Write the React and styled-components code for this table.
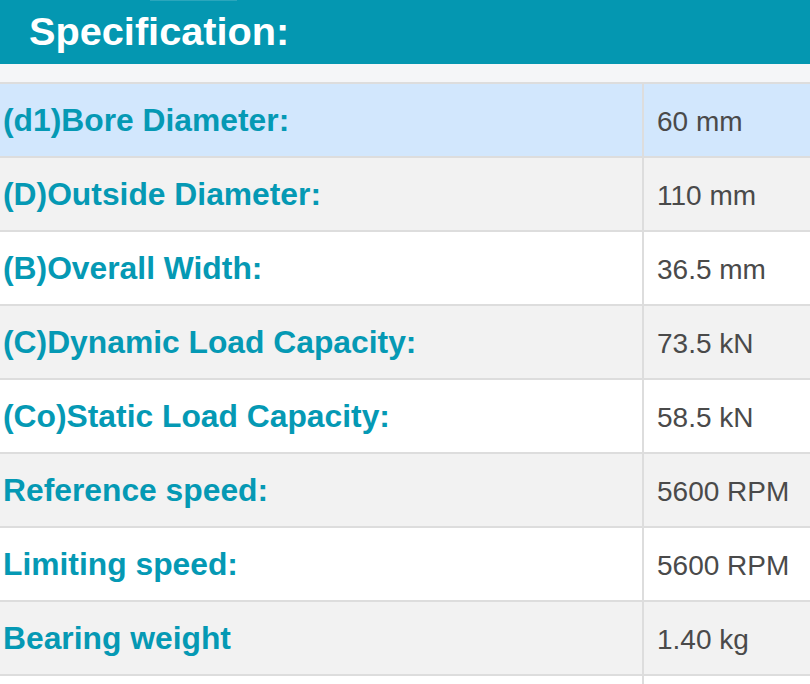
import React from "react";
import styled, { createGlobalStyle } from "styled-components";

const Global = createGlobalStyle`
  html, body { margin: 0; padding: 0; background: #ffffff; }
  body { font-family: "Liberation Sans", Arial, Helvetica, sans-serif; overflow: hidden; }
`;

const Page = styled.div`
  width: 810px;
  height: 684px;
  overflow: hidden;
  display: flex;
  flex-direction: column;
`;

const Header = styled.header`
  position: relative;
  height: 64px;
  flex: none;
  background: #0497b1;
  display: flex;
  align-items: center;
  padding-left: 29px;
  &::before {
    content: "";
    position: absolute;
    top: 0;
    left: 150px;
    width: 87px;
    height: 1px;
    background: #2aa6bc;
  }
`;

const Title = styled.h2`
  margin: 0;
  color: #ffffff;
  font-weight: 700;
  font-size: 39.7px;
  line-height: 1;
  margin-top: -1px;
`;

const Band = styled.div`
  height: 18px;
  flex: none;
  background: #f5f6f8;
`;

const Table = styled.div`
  display: flex;
  flex-direction: column;
`;

const Row = styled.div`
  display: grid;
  grid-template-columns: 644px 1fr;
  height: 72px;
  flex: none;
  border-top: 2px solid #dddddd;
  background: ${(p) => (p.$active ? "#d2e7fd" : p.$odd ? "#f2f2f2" : "#ffffff")};
`;

const Label = styled.div`
  display: flex;
  align-items: center;
  padding-left: 3px;
  border-right: 2px solid #dddddd;
  color: #0599b4;
  font-weight: 700;
  font-size: 31.8px;
  white-space: nowrap;
`;

const Value = styled.div`
  display: flex;
  align-items: center;
  padding-left: 13px;
  padding-top: 3px;
  color: #4a4a4a;
  font-size: 28px;
  white-space: nowrap;
`;

const specs = [
  ["(d1)Bore Diameter:", "60 mm"],
  ["(D)Outside Diameter:", "110 mm"],
  ["(B)Overall Width:", "36.5 mm"],
  ["(C)Dynamic Load Capacity:", "73.5 kN"],
  ["(Co)Static Load Capacity:", "58.5 kN"],
  ["Reference speed:", "5600 RPM"],
  ["Limiting speed:", "5600 RPM"],
  ["Bearing weight", "1.40 kg"],
  ["", ""],
];

export default function App() {
  return (
    <>
      <Global />
      <Page>
        <Header>
          <Title>Specification:</Title>
        </Header>
        <Band />
        <Table>
          {specs.map(([k, v], i) => (
            <Row key={i} $active={i === 0} $odd={i % 2 === 1}>
              <Label>{k}</Label>
              <Value>{v}</Value>
            </Row>
          ))}
        </Table>
      </Page>
    </>
  );
}
